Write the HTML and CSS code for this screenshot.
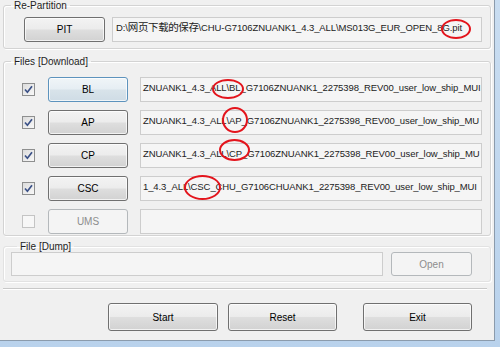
FILE: index.html
```html
<!DOCTYPE html>
<html lang="en">
<head>
    <meta charset="UTF-8">
    <title>Odin</title>
    <link rel="stylesheet" href="styles.css">
</head>
<body>
<div class="frame">
    <div class="client">
        <fieldset class="group group-pit">
            <legend>Re-Partition</legend>
            <div class="row row-pit">
                <button class="btn btn-file">PIT</button>
                <div class="path path-pit">D:\<span class="cjk">网页下载的保存</span>\CHU-G7106ZNUANK1_4.3_ALL\MS013G_EUR_OPEN_8G<span class="mark mark-pit">.pit</span></div>
            </div>
        </fieldset>

        <fieldset class="group group-files">
            <legend>Files [Download]</legend>
            <div class="files">
                <div class="row">
                    <span class="check"><svg viewBox="0 0 13 13" width="13" height="13"><path d="M3 6.5 L5.4 9.2 L10 3.2" fill="none" stroke="#3b5187" stroke-width="1.7"/></svg></span>
                    <button class="btn btn-file btn-hot">BL</button>
                    <div class="path">ZNUANK1_4.3_ALL<span class="mark mark-bl">\BL</span>_G7106ZNUANK1_2275398_REV00_user_low_ship_MUI</div>
                </div>
                <div class="row">
                    <span class="check"><svg viewBox="0 0 13 13" width="13" height="13"><path d="M3 6.5 L5.4 9.2 L10 3.2" fill="none" stroke="#3b5187" stroke-width="1.7"/></svg></span>
                    <button class="btn btn-file">AP</button>
                    <div class="path">ZNUANK1_4.3_ALL<span class="mark mark-ap">\AP</span>_G7106ZNUANK1_2275398_REV00_user_low_ship_MU</div>
                </div>
                <div class="row">
                    <span class="check"><svg viewBox="0 0 13 13" width="13" height="13"><path d="M3 6.5 L5.4 9.2 L10 3.2" fill="none" stroke="#3b5187" stroke-width="1.7"/></svg></span>
                    <button class="btn btn-file">CP</button>
                    <div class="path">ZNUANK1_4.3_ALL<span class="mark mark-cp">\CP</span>_G7106ZNUANK1_2275398_REV00_user_low_ship_MU</div>
                </div>
                <div class="row">
                    <span class="check"><svg viewBox="0 0 13 13" width="13" height="13"><path d="M3 6.5 L5.4 9.2 L10 3.2" fill="none" stroke="#3b5187" stroke-width="1.7"/></svg></span>
                    <button class="btn btn-file">CSC</button>
                    <div class="path">1_4.3_ALL<span class="mark mark-csc">\CSC</span>_CHU_G7106CHUANK1_2275398_REV00_user_low_ship_MUI</div>
                </div>
                <div class="row">
                    <span class="check check-off"></span>
                    <button class="btn btn-file" disabled>UMS</button>
                    <div class="path"></div>
                </div>
            </div>
        </fieldset>

        <fieldset class="group group-dump">
            <legend>File [Dump]</legend>
            <div class="row row-dump">
                <div class="path path-dump"></div>
                <button class="btn btn-open" disabled>Open</button>
            </div>
        </fieldset>

        <div class="separator"></div>

        <div class="actions">
            <button class="btn btn-action btn-start">Start</button>
            <button class="btn btn-action btn-reset">Reset</button>
            <button class="btn btn-action">Exit</button>
        </div>
    </div>
</div>
</body>
</html>
```

FILE: styles.css
```css
* {
    box-sizing: border-box;
}

html, body {
    margin: 0;
    padding: 0;
}

body {
    width: 500px;
    height: 347px;
    overflow: hidden;
    font: 9.5px "Liberation Sans", "Noto Sans CJK SC", sans-serif;
    color: #1e1e1e;
}

.frame {
    width: 500px;
    height: 347px;
    padding: 0 5px 6px 0;
    background: linear-gradient(180deg, #c9ddf1, #b9d2ec);
}

.client {
    width: 495px;
    height: 341px;
    padding: 0 3px;
    background: #f0f0f0;
    border-right: 1px solid #8b9bac;
    border-bottom: 1px solid #8b9bac;
    display: flex;
    flex-direction: column;
}

.group {
    margin: 0;
    min-width: 0;
    padding: 0 8px 6px 7px;
    border: 1px solid #d3d3d3;
    border-radius: 3px;
    box-shadow: inset 1px 1px 0 #fff, 1px 1px 0 #fff;
}

.group legend {
    padding: 0 3px;
    line-height: 13px;
    font-size: 10px;
    color: #1e1e1e;
}

.group-pit {
    margin-top: -1px;
    padding-top: 5px;
}

.group-files {
    margin-top: 6px;
    padding-top: 9px;
    padding-bottom: 1px;
}

.group-dump {
    margin-top: 5px;
    padding-bottom: 5px;
    border-color: #e2e2e2;
}

.group-dump legend {
    line-height: 11px;
    margin-left: 6px;
}

.row {
    display: flex;
    align-items: center;
    height: 25px;
}

.row-pit {
    padding-left: 13px;
    gap: 7px;
}

.files {
    display: flex;
    flex-direction: column;
    gap: 8px;
}

.files .row {
    padding-left: 11px;
}

.row-dump {
    height: 24px;
    gap: 8px;
}

.btn {
    font: inherit;
    font-size: 10px;
    color: #000;
    height: 100%;
    padding: 0;
    border: 1px solid #707070;
    border-radius: 3px;
    background: linear-gradient(180deg, #f3f3f3 0%, #ececec 48%, #dedede 52%, #d2d2d2 100%);
    box-shadow: inset 0 0 0 1px rgba(255, 255, 255, 0.7);
}

.btn-file {
    width: 81px;
    flex: none;
}

.files .btn-file {
    width: 80px;
    margin-left: 13px;
    margin-right: 12px;
}

.btn-hot {
    border-color: #5d93bd;
    background: linear-gradient(180deg, #f0f5f8 0%, #e6eef3 48%, #d8e3ea 52%, #cfdce5 100%);
}

.btn:disabled {
    color: #8d8d8d;
    border-color: #b4b8bb;
    background: #f4f4f4;
    box-shadow: none;
}

.btn-open {
    width: 81px;
    flex: none;
    margin-right: 10px;
}

.check {
    flex: none;
    width: 13px;
    height: 13px;
    border: 1px solid #8e8f8f;
    background: linear-gradient(135deg, #dcdcdc, #f8f8f8);
    display: flex;
    align-items: center;
    justify-content: center;
}

.check svg {
    display: block;
    margin: -1px;
}

.check-off {
    border-color: #c4c4c4;
    background: #f7f7f7;
}

.path {
    flex: 1;
    min-width: 0;
    height: 100%;
    padding: 3px 2px;
    line-height: 13px;
    letter-spacing: -0.1px;
    white-space: nowrap;
    overflow-x: clip;
    overflow-y: visible;
    background: #f5f5f5;
    border: 1px solid #cdcdcd;
    color: #222;
}

.path-pit {
    padding-left: 3px;
}

.cjk {
    font-size: 10.5px;
    letter-spacing: -0.4px;
}

.mark {
    position: relative;
    --w: 26px;
    --h: 16px;
    --dx: 0px;
    --dy: 0px;
}

.mark::after {
    content: "";
    position: absolute;
    left: calc(50% - var(--w) / 2 + var(--dx));
    top: calc(50% - var(--h) / 2 + var(--dy));
    width: var(--w);
    height: var(--h);
    border: 2px solid #e3141c;
    border-radius: 50%;
}

.mark-pit {
    --w: 26px;
    --h: 16px;
    --dx: -2px;
    --dy: -1px;
}

.mark-bl {
    --w: 28px;
    --h: 16px;
    --dx: -8px;
    --dy: -1px;
}

.mark-ap {
    --w: 22px;
    --h: 22px;
    --dx: -1px;
    --dy: -3px;
}

.mark-cp {
    --w: 27px;
    --h: 18px;
    --dx: -2px;
    --dy: -6px;
}

.mark-csc {
    --w: 33px;
    --h: 21px;
    --dx: 1px;
    --dy: -1px;
}

.separator {
    margin-top: 6px;
    height: 2px;
    border-top: 1px solid #c8c8c8;
    border-bottom: 1px solid #fff;
    margin-right: 4px;
}

.actions {
    display: flex;
    height: 28px;
    margin-top: 13px;
    padding-left: 105px;
}

.btn-action {
    width: 109px;
}

.btn-start {
    width: 110px;
    margin-right: 10px;
}

.btn-reset {
    margin-right: 26px;
}
```
